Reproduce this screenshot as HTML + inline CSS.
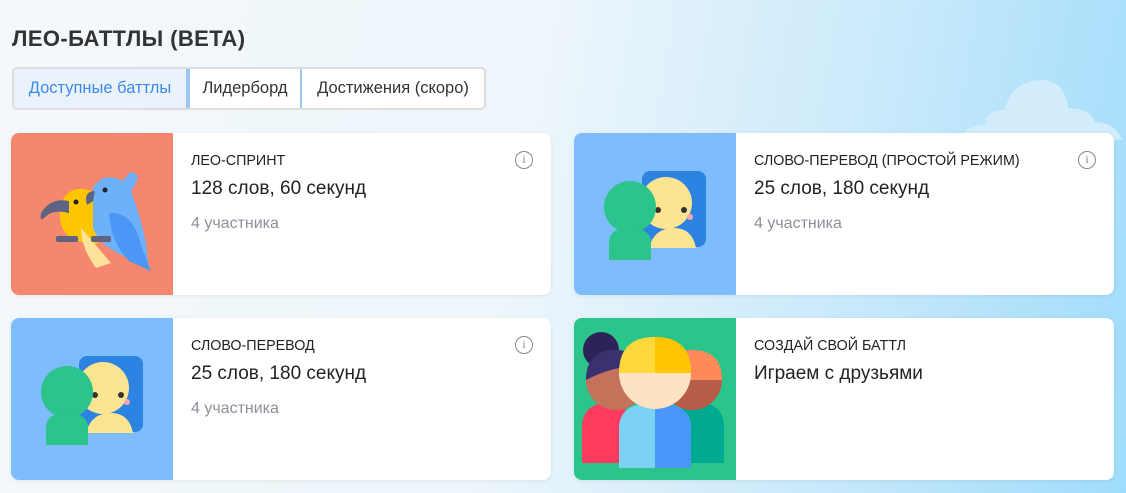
<!DOCTYPE html>
<html><head><meta charset="utf-8"><style>
*{box-sizing:border-box;margin:0;padding:0}
body{width:1126px;height:493px;overflow:hidden;font-family:"Liberation Sans","DejaVu Sans",sans-serif;background:linear-gradient(100deg,#f3f8fb 0%,#eef6fb 45%,#c8e9fb 75%,#9fdcfb 100%);position:relative}
h1{position:absolute;left:12px;top:26px;font-size:22px;font-weight:bold;color:#333;letter-spacing:.4px}
.tabs{position:absolute;left:12px;top:67px;height:43px;display:flex;border:2px solid #ddd;border-radius:5px;background:#fff;overflow:hidden}
.tab{display:flex;align-items:center;font-size:16.5px;color:#333;white-space:nowrap}
.t1{background:#eaf3fc;color:#3d8ae8;border:2px solid #9cc8f3;border-radius:4px 0 0 4px;margin:-2px 0 -2px -2px;width:176px;justify-content:center}
.t2{border:2px solid #9cc8f3;margin:-2px 0;width:114px;justify-content:center}
.t3{width:182px;justify-content:center}
.card{position:absolute;width:540px;height:162px;background:#fff;border-radius:8px;overflow:hidden;box-shadow:0 1px 4px rgba(0,0,0,.08)}
.img{position:absolute;left:0;top:0;width:162px;height:162px}
.lab{position:absolute;left:180px;top:20px;font-size:14.3px;color:#222}
.tit{position:absolute;left:180px;top:45px;font-size:19px;color:#222}
.sub{position:absolute;left:180px;top:82px;font-size:16px;color:#8a919a}
.info{position:absolute;right:18px;top:18px;width:18px;height:18px;border:1.5px solid #888;border-radius:50%;font-size:12px;color:#888;text-align:center;line-height:15px;font-family:"Liberation Serif",serif}
</style></head><body>
<svg style="position:absolute;left:950px;top:70px" width="176" height="70"><path d="M10 70 Q15 55 35 55 Q35 40 55 40 Q60 12 90 10 Q115 10 118 38 Q140 38 145 52 Q165 52 172 70Z" fill="#d2ecfc"/></svg>
<h1>ЛЕО-БАТТЛЫ (BETA)</h1>
<div class="tabs"><div class="tab t1">Доступные баттлы</div><div class="tab t2">Лидерборд</div><div class="tab t3">Достижения (скоро)</div></div>

<div class="card" style="left:11px;top:133px">
<svg class="img" viewBox="0 0 162 162"><rect width="162" height="162" fill="#f4876d"/>
<path d="M50 70 Q60 50 80 58 Q92 68 90 100 Q88 115 78 112 L60 105 Q45 95 50 70Z" fill="#fec600"/>
<path d="M70 95 L100 130 L85 135 Q70 115 70 95Z" fill="#fde39a"/>
<path d="M58 68 Q40 64 30 80 Q28 90 34 84 Q42 76 58 80Z" fill="#5e6382"/>
<circle cx="65" cy="69" r="2.5" fill="#222"/>
<path d="M82 55 Q92 38 112 48 L118 40 Q128 38 126 48 L120 58 Q130 85 135 110 L138 138 L118 125 Q90 115 82 95Z" fill="#6eb1fb"/>
<path d="M98 80 Q122 78 130 112 L140 138 L118 128 Q100 110 98 80Z" fill="#4b97f6"/>
<path d="M84 58 Q72 58 76 72 L82 68Z" fill="#5e6382"/>
<circle cx="94" cy="57" r="2.5" fill="#222"/>
<rect x="45" y="103" width="22" height="6" rx="2" fill="#5e6382"/><rect x="80" y="103" width="20" height="6" rx="2" fill="#5e6382"/>
</svg>
<div class="lab">ЛЕО-СПРИНТ</div><div class="tit">128 слов, 60 секунд</div><div class="sub">4 участника</div><div class="info">i</div></div>

<div class="card" style="left:574px;top:133px">
<svg class="img" viewBox="0 0 162 162"><rect width="162" height="162" fill="#7dbcfd"/>
<rect x="68" y="38" width="64" height="76" rx="8" fill="#2c83e2"/>
<circle cx="92" cy="70" r="26" fill="#fde491"/><path d="M75 115 Q80 95 100 95 Q118 95 122 115Z" fill="#fde491"/>
<circle cx="84" cy="77" r="3" fill="#333"/><circle cx="110" cy="77" r="3" fill="#333"/><circle cx="116" cy="84" r="3" fill="#f7a5b0"/>
<circle cx="56" cy="74" r="26" fill="#2bc48b"/><path d="M35 127 L35 110 Q35 95 55 95 Q77 95 77 110 L77 127Z" fill="#2bc48b"/>
</svg>
<div class="lab">СЛОВО-ПЕРЕВОД (ПРОСТОЙ РЕЖИМ)</div><div class="tit">25 слов, 180 секунд</div><div class="sub">4 участника</div><div class="info">i</div></div>

<div class="card" style="left:11px;top:318px">
<svg class="img" viewBox="0 0 162 162"><rect width="162" height="162" fill="#7dbcfd"/>
<rect x="68" y="38" width="64" height="76" rx="8" fill="#2c83e2"/>
<circle cx="92" cy="70" r="26" fill="#fde491"/><path d="M75 115 Q80 95 100 95 Q118 95 122 115Z" fill="#fde491"/>
<circle cx="84" cy="77" r="3" fill="#333"/><circle cx="110" cy="77" r="3" fill="#333"/><circle cx="116" cy="84" r="3" fill="#f7a5b0"/>
<circle cx="56" cy="74" r="26" fill="#2bc48b"/><path d="M35 127 L35 110 Q35 95 55 95 Q77 95 77 110 L77 127Z" fill="#2bc48b"/>
</svg>
<div class="lab">СЛОВО-ПЕРЕВОД</div><div class="tit">25 слов, 180 секунд</div><div class="sub">4 участника</div><div class="info">i</div></div>

<div class="card" style="left:574px;top:318px">
<svg class="img" viewBox="0 0 162 162"><rect width="162" height="162" fill="#2bc48b"/>
<circle cx="27" cy="32" r="18" fill="#2c2459"/>
<path d="M8 145 L8 110 Q8 85 35 85 Q55 85 60 110 L60 145Z" fill="#fe3a5f"/>
<circle cx="42" cy="62" r="30" fill="#c4735a"/><path d="M12 62 Q12 32 42 32 Q62 32 70 50 Q45 45 12 62Z" fill="#3a3270"/>
<path d="M100 145 L100 110 Q100 85 125 85 Q150 85 150 110 L150 145Z" fill="#00a98f"/>
<circle cx="118" cy="62" r="30" fill="#b85c4a"/><path d="M88 62 Q88 32 118 32 Q148 32 148 62Z" fill="#fe8a59"/>
<path d="M45 150 L45 110 Q45 85 80 85 Q117 85 117 110 L117 150Z" fill="#7bd2f2"/><path d="M81 85 Q117 85 117 110 L117 150 L81 150Z" fill="#4a97fb"/>
<circle cx="81" cy="55" r="36" fill="#fee3c3"/><path d="M81 19 A36 36 0 0 1 117 55 L81 55Z" fill="#fece9c" opacity=".9"/>
<path d="M45 55 Q45 19 81 19 Q117 19 117 55Z" fill="#ffd93c"/><path d="M81 19 Q117 19 117 55 L81 55Z" fill="#fec600"/>
</svg>
<div class="lab">СОЗДАЙ СВОЙ БАТТЛ</div><div class="tit">Играем с друзьями</div></div>
</body></html>
